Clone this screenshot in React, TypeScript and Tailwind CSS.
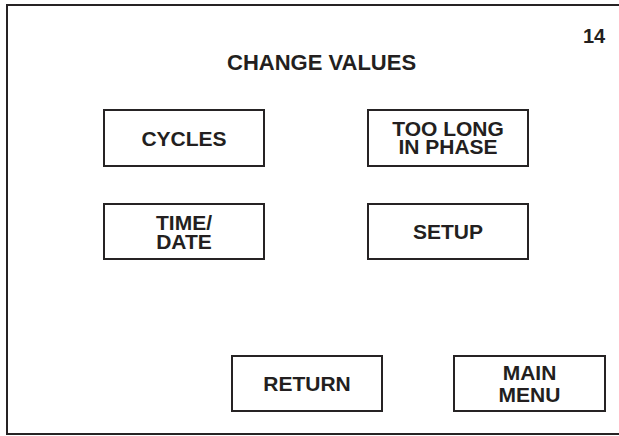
import type { ReactNode } from "react";

// ── Screen button ─────────────────────────────────────────────────────────────

function ScreenButton({
    children,
    className,
}: {
    children: ReactNode;
    className: string;
}) {
    return (
        <div
            className={`flex shrink-0 flex-col items-center justify-center border-2 border-[#262324] text-center text-[21px] font-bold text-[#231f20] ${className}`}
        >
            {children}
        </div>
    );
}

// ── Main screen ───────────────────────────────────────────────────────────────

export default function App() {
    return (
        <div
            className="h-[436px] w-[619px] overflow-hidden bg-white"
            style={{ fontFamily: '"Liberation Sans", Arial, sans-serif' }}
        >
            <div className="ml-[6px] mt-[4px] flex h-[431px] w-[630px] flex-col border-2 border-[#262324]">
                <div className="ml-[575px] mt-[20px] w-[22px] text-[20px] font-bold leading-[20px] text-[#231f20]">
                    14
                </div>

                <div className="ml-[219px] mt-[6px] text-[22px] font-bold leading-[22px] text-[#231f20]">
                    CHANGE VALUES
                </div>

                <div className="ml-[95px] mt-[35px] flex gap-[102px]">
                    <ScreenButton className="h-[58px] w-[162px] leading-[21px]">CYCLES</ScreenButton>
                    <ScreenButton className="h-[58px] w-[162px] leading-[18px]">
                        <span>TOO LONG</span>
                        <span>IN PHASE</span>
                    </ScreenButton>
                </div>

                <div className="ml-[95px] mt-[36px] flex gap-[102px]">
                    <ScreenButton className="h-[57px] w-[162px] leading-[19px]">
                        <span>TIME/</span>
                        <span>DATE</span>
                    </ScreenButton>
                    <ScreenButton className="h-[57px] w-[162px] leading-[21px]">SETUP</ScreenButton>
                </div>

                <div className="ml-[223px] mt-[95px] flex gap-[70px]">
                    <ScreenButton className="h-[57px] w-[152px] leading-[21px]">RETURN</ScreenButton>
                    <ScreenButton className="h-[57px] w-[153px] leading-[22px]">
                        <span>MAIN</span>
                        <span>MENU</span>
                    </ScreenButton>
                </div>
            </div>
        </div>
    );
}
